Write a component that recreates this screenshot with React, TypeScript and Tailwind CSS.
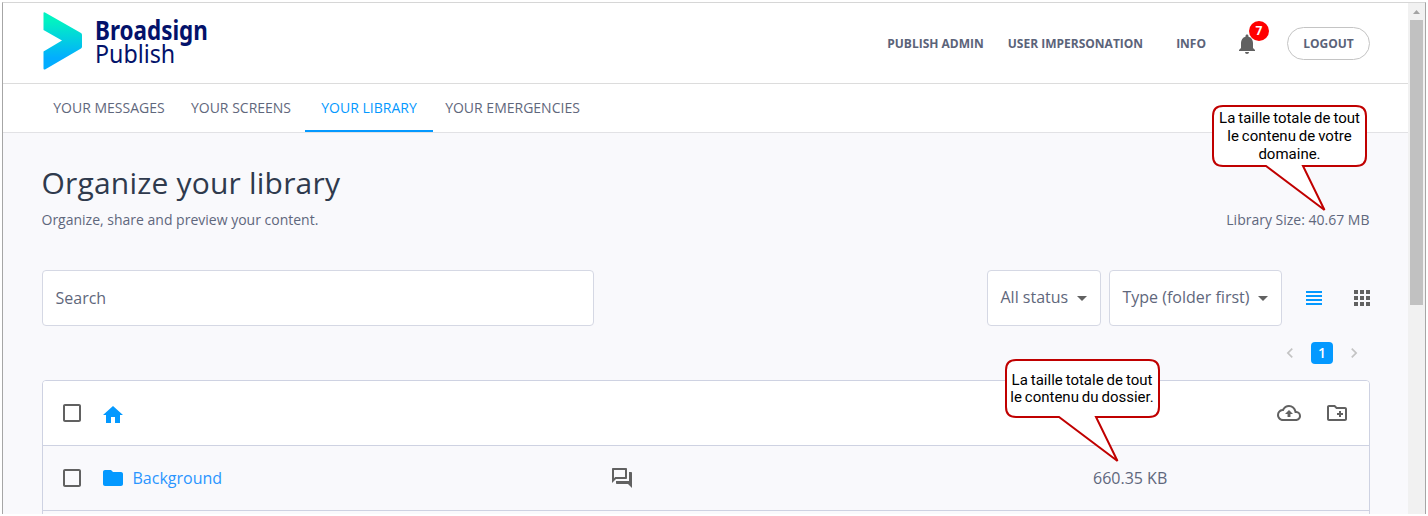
import type { ReactNode } from "react";
import {
  MdApps,
  MdArrowDropDown,
  MdCheckBoxOutlineBlank,
  MdChevronLeft,
  MdChevronRight,
  MdFolder,
  MdHome,
  MdNotifications,
  MdOutlineCloudUpload,
  MdOutlineCreateNewFolder,
  MdOutlineForum,
  MdViewHeadline,
} from "react-icons/md";

const tabs = [
  { label: "YOUR MESSAGES", width: "w-[136px]" },
  { label: "YOUR SCREENS", width: "w-[128px]" },
  { label: "YOUR LIBRARY", width: "w-[128px]", active: true },
  { label: "YOUR EMERGENCIES", width: "w-[159px]" },
];

function Logo() {
  return (
    <div className="flex pt-[9px]">
      <svg width="39" height="58" viewBox="0 0 39 58">
        <defs>
          <linearGradient id="chevron" x1="0" y1="0" x2="0" y2="1">
            <stop offset="0.15" stopColor="#02f2c2" />
            <stop offset="0.8" stopColor="#02adff" />
          </linearGradient>
        </defs>
        <path
          d="M0.5 1.2Q0.5 -0.2 2 0.6L38 21Q39 21.6 39 23V34.5Q39 36 38 36.6L2 57.4Q0.5 58 0.5 56.5V39.5L19 28.5L0.5 18Z"
          fill="url(#chevron)"
        />
      </svg>
      <div className="ml-[12.5px] mt-[7px] w-[120px] font-['Noto_Sans',sans-serif] leading-[23px] text-[#03126a]">
        <div className="origin-left scale-x-[0.863] text-[26px] font-bold whitespace-nowrap">Broadsign</div>
        <div className="origin-left scale-x-[0.93] text-[25px] whitespace-nowrap">Publish</div>
      </div>
    </div>
  );
}

function Header() {
  return (
    <header className="flex h-[81px] justify-between border-b border-[#dcdcdc] bg-white pr-[38px] pl-[40px]">
      <Logo />
      <div className="flex h-[81px] items-center text-[12px] font-bold text-[#5b6379]">
        <span>PUBLISH ADMIN</span>
        <span className="ml-6">USER IMPERSONATION</span>
        <span className="ml-[33px]">INFO</span>
        <div className="relative ml-[29px]">
          <MdNotifications className="size-6 text-[#616161]" />
          <span className="absolute -top-[11px] left-[14px] flex size-5 items-center justify-center rounded-full bg-[#ff0000] text-[12px] text-white">
            7
          </span>
        </div>
        <button className="ml-7 flex h-[33px] w-[83px] items-center justify-center rounded-full border border-[#c4c4c4] font-bold">
          LOGOUT
        </button>
      </div>
    </header>
  );
}

function Tabs() {
  return (
    <nav className="flex h-[49px] border-b border-[#e2e2e5] bg-white pl-[38px] text-[14px]">
      {tabs.map((tab) => (
        <div
          key={tab.label}
          className={`flex items-center justify-center border-b-2 whitespace-nowrap ${tab.width} ${
            tab.active ? "border-[#0499ff] text-[#0499ff]" : "border-transparent text-[#5f677c]"
          }`}
        >
          {tab.label}
        </div>
      ))}
    </nav>
  );
}

function Select({ label, className }: { label: string; className: string }) {
  return (
    <div
      className={`flex h-14 items-center justify-between rounded-[4px] border border-[#d5d8e4] bg-white pr-[6px] pl-[12.5px] whitespace-nowrap ${className}`}
    >
      <span className="pb-[2px]">{label}</span>
      <MdArrowDropDown className="size-6 text-[#616161]" />
    </div>
  );
}

function Row({ children, className = "" }: { children: ReactNode; className?: string }) {
  return <div className={`flex h-[65px] items-center border-b border-[#ced2e2] pl-[17px] ${className}`}>{children}</div>;
}

function Scrollbar() {
  return (
    <div className="h-full w-[17px] bg-[#f1f1f1] px-[2px]">
      <div className="flex h-[17px] items-center justify-center">
        <svg width="7" height="4" viewBox="0 0 7 4">
          <path d="M3.5 0L7 4H0Z" fill="#a3a3a3" />
        </svg>
      </div>
      <div className="h-[285px] bg-[#c1c1c1]" />
    </div>
  );
}

export default function App() {
  return (
    <div className="relative h-[516px] w-[1428px] overflow-hidden bg-white pt-[2px] pl-[2px] font-['Open_Sans',sans-serif] text-[#5f677c]">
      <div className="flex h-[512px] w-[1424px] border-t border-r border-l border-t-[#d6d6d6] border-r-[#a6a6a6] border-l-[#a6a6a6]">
        <div className="flex w-[1405px] flex-col bg-[#f9f9fc]">
          <Header />
          <Tabs />
          <main className="min-h-0 flex-1 overflow-hidden pr-[38px] pl-[39px]">
            <h1 className="-ml-[0.5px] mt-[29px] text-[30px] leading-[42px] tracking-[0.2px] text-[#2f3a4d]">Organize your library</h1>
            <div className="-ml-[0.5px] mt-[6px] flex justify-between pr-[0.5px] text-[14px] leading-[20px]">
              <p>Organize, share and preview your content.</p>
              <p>Library Size: 40.67 MB</p>
            </div>
            <div className="mt-10 flex items-center">
              <div className="flex h-14 w-[552px] items-center rounded-[4px] border border-[#d5d8e4] bg-white pl-[12.5px]">Search</div>
              <div className="ml-auto flex items-center">
                <Select label="All status" className="w-[114px]" />
                <Select label="Type (folder first)" className="ml-2 w-[173px]" />
                <MdViewHeadline className="ml-5 size-6 text-[#0499ff]" />
                <MdApps className="-mr-[4px] ml-6 size-6 text-[#616161]" />
              </div>
            </div>
            <div className="mt-4 flex h-[22px] items-center justify-end pr-[6px]">
              <MdChevronLeft className="size-5 text-[#c4c4c4]" />
              <span className="mx-[11px] flex size-[22px] items-center justify-center rounded-[4px] bg-[#0499ff] pb-[2px] text-[14px] font-semibold text-white">
                1
              </span>
              <MdChevronRight className="size-5 text-[#c4c4c4]" />
            </div>
            <div className="mt-4 h-[200px] rounded-t-[4px] border border-[#ced2e2]">
              <Row className="rounded-t-[3px] bg-white pr-5">
                <MdCheckBoxOutlineBlank className="size-6 text-[#616161]" />
                <MdHome className="mt-[3px] ml-[17px] size-6 text-[#0499ff]" />
                <MdOutlineCloudUpload className="ml-auto size-6 text-[#616161]" />
                <MdOutlineCreateNewFolder className="ml-6 size-6 text-[#616161]" />
              </Row>
              <Row>
                <MdCheckBoxOutlineBlank className="size-6 text-[#616161]" />
                <MdFolder className="ml-[17px] size-6 text-[#0499ff]" />
                <span className="ml-[7.5px] w-[477.5px] text-[#2a95ff]">Background</span>
                <MdOutlineForum className="size-6 text-[#616161]" />
                <span className="ml-[459px]">660.35 KB</span>
              </Row>
            </div>
          </main>
        </div>
        <Scrollbar />
      </div>

      <div className="absolute top-[105px] left-[1212px] h-[108px] w-[156px]">
        <svg className="absolute inset-0" width="156" height="108" viewBox="0 0 156 108">
          <path
            d="M11 1H144Q154 1 154 11V51Q154 61 144 61H91L112.5 105L54 61H11Q1 61 1 51V11Q1 1 11 1Z"
            fill="#fff"
            stroke="#c00000"
            strokeWidth="2"
          />
        </svg>
        <p className="relative pt-[5px] pr-[1px] text-center font-['Roboto',sans-serif] text-[15px] leading-[17.8px] whitespace-pre text-black [word-spacing:-0.8px]">
          {"La taille totale de tout\nle contenu de votre\ndomaine."}
        </p>
      </div>
      <div className="absolute top-[359px] left-[1005px] h-[106px] w-[156px]">
        <svg className="absolute inset-0" width="156" height="106" viewBox="0 0 156 106">
          <path
            d="M11 1H144Q154 1 154 11V48Q154 58 144 58H91L112.5 102L54 58H11Q1 58 1 48V11Q1 1 11 1Z"
            fill="#fff"
            stroke="#c00000"
            strokeWidth="2"
          />
        </svg>
        <p className="relative pt-[13px] pr-[2px] text-center font-['Roboto',sans-serif] text-[15px] leading-[17px] whitespace-pre text-black [word-spacing:-0.8px]">
          {"La taille totale de tout\nle contenu du dossier."}
        </p>
      </div>
    </div>
  );
}
